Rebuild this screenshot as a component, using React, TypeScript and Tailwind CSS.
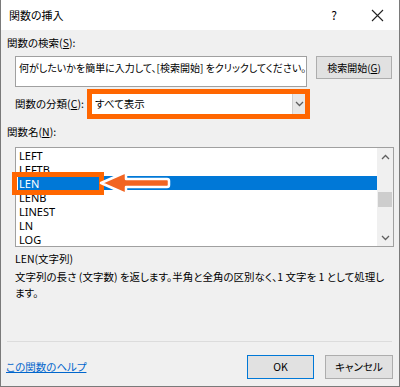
import React from 'react';

const items = ['LEFT', 'LEFTB', 'LEN', 'LENB', 'LINEST', 'LN', 'LOG'];

const Chevron: React.FC<{ up?: boolean }> = ({ up }) => (
  <svg width="9" height="6" viewBox="0 0 9 6">
    <path
      d={up ? 'M1 5 L4.5 1.5 L8 5' : 'M1 1 L4.5 4.5 L8 1'}
      fill="none"
      stroke="#606060"
      strokeWidth="1.3"
    />
  </svg>
);

const App: React.FC = () => {
  return (
    <div className="w-[400px] h-[387px] bg-[#f0f0f0] border-x border-b border-[#7a7a7a] font-['Noto_Sans_CJK_JP','Noto_Sans',sans-serif] text-[10.5px] text-black [font-feature-settings:'palt'] leading-none relative overflow-hidden whitespace-nowrap">
      {/* title bar */}
      <div className="h-[30px] bg-white flex items-center pl-[8px]">
        <span className="text-[11px]">関数の挿入</span>
        <span className="ml-auto mr-[34px] text-[12px]">?</span>
        <svg width="13" height="13" viewBox="0 0 13 13" className="mr-[15px]">
          <path d="M1 1 L12 12 M12 1 L1 12" stroke="#222" strokeWidth="1.1" />
        </svg>
      </div>

      <div className="pl-[6px] pr-[6px]">
        <div className="h-[14px] mt-[6px] flex items-center">
          関数の検索(<u>S</u>):
        </div>

        <div className="flex mt-[6px] ml-[8px]">
          <div className="w-[292px] h-[31px] bg-white border border-[#a0a0a0] px-[3px] pt-[6px] text-[10px]">
            何がしたいかを簡単に入力して、[検索開始] をクリックしてください。
          </div>
          <button className="ml-[9px] w-[76px] h-[23px] bg-[#e1e1e1] border border-[#adadad] flex items-center justify-center text-[10px]">
            検索開始(<u>G</u>)
          </button>
        </div>

        <div className="flex items-center mt-[2px] ml-[8px] h-[30px]">
          <span className="w-[72px]">
            関数の分類(<u>C</u>):
          </span>
          <div className="w-[223px] h-[30px] border-[5px] border-[#ff6600] bg-white flex items-center">
            <span className="pl-[3px]">すべて表示</span>
            <div className="ml-auto w-[13px] h-full bg-[#e8e8e8] border-l border-[#d0d0d0] flex items-center justify-center">
              <Chevron />
            </div>
          </div>
        </div>

        <div className="h-[14px] mt-[6px] flex items-center">
          関数名(<u>N</u>):
        </div>

        <div className="mt-[8px] ml-[8px] w-[379px] h-[100px] bg-white border border-[#a0a0a0] flex">
          <div className="flex-1 pl-[2px]">
            {items.map((it) => (
              <div
                key={it}
                className={`h-[14px] flex items-center pl-[1px] font-['Noto_Sans',sans-serif] text-[11px] ${
                  it === 'LEN' ? 'bg-[#0078d7] text-white' : ''
                }`}
              >
                {it}
              </div>
            ))}
          </div>
          <div className="w-[16px] bg-[#f0f0f0] flex flex-col items-center">
            <div className="h-[17px] flex items-center justify-center">
              <Chevron up />
            </div>
            <div className="mt-[27px] w-[14px] h-[15px] bg-[#cdcdcd]" />
            <div className="mt-auto h-[17px] flex items-center justify-center">
              <Chevron />
            </div>
          </div>
        </div>

        <div className="ml-[8px] mt-[5px] h-[14px] flex items-center">LEN(文字列)</div>
        <div className="ml-[8px] mt-[3px] leading-[16px]">
          文字列の長さ (文字数) を返します。半角と全角の区別なく、1 文字を 1 として処理し
          <br />
          ます。
        </div>
      </div>

      <div className="absolute left-[6px] right-[7px] top-[341px] h-px bg-[#dcdcdc]" />

      <div className="absolute left-0 right-0 top-[355px] flex items-center">
        <a className="ml-[5px] text-[#0066cc] underline">この関数のヘルプ</a>
        <button className="ml-auto w-[67px] h-[24px] bg-[#e1e1e1] border border-[#0078d7] flex items-center justify-center">
          OK
        </button>
        <button className="ml-[11px] mr-[6px] w-[68px] h-[24px] bg-[#e1e1e1] border border-[#adadad] flex items-center justify-center">
          キャンセル
        </button>
      </div>

      {/* annotation: box around LEN */}
      <div className="absolute left-[11px] top-[172px] w-[92px] h-[23px] border-[5px] border-[#ff6600]" />
      {/* annotation: arrow */}
      <svg className="absolute left-[96px] top-[169px]" width="76" height="28" viewBox="0 0 76 28">
        <path
          d="M4 14 L29 3 L29 10 L70 10 Q72 10 72 12 L72 16 Q72 18 70 18 L29 18 L29 25 Z"
          fill="#f26522"
          stroke="#ffffff"
          strokeWidth="2.5"
          strokeLinejoin="round"
        />
      </svg>
    </div>
  );
};

export default App;
